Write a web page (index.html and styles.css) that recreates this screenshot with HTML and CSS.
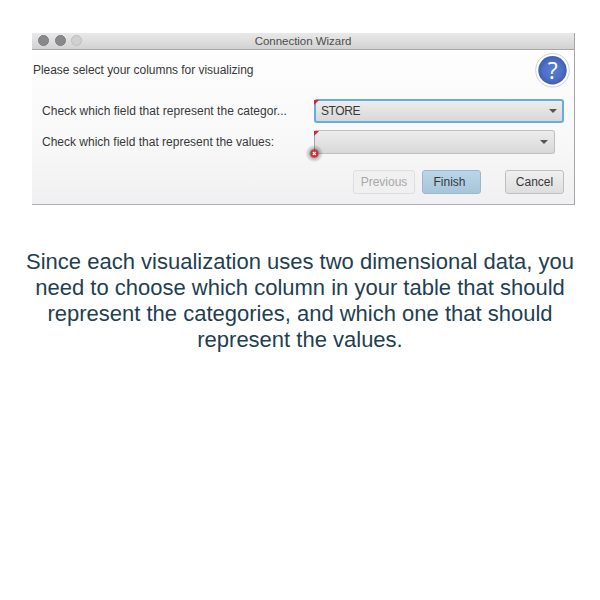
FILE: index.html
```
<!DOCTYPE html>
<html lang="en">
<head>
<meta charset="utf-8">
<title>Connection Wizard</title>
<link rel="stylesheet" href="styles.css">
</head>
<body>
<main class="window">
  <header class="titlebar">
    <div class="lights"><i class="light"></i><i class="light"></i><i class="light light-off"></i></div>
    <span class="title">Connection Wizard</span>
  </header>
  <div class="content">
    <div class="intro">
      <span class="intro-text">Please select your columns for visualizing</span>
      <svg class="help" width="35" height="35" viewBox="0 0 35 35">
        <defs><radialGradient id="blue"><stop offset="0" stop-color="#597fd0"/><stop offset=".65" stop-color="#4e70c5"/><stop offset="1" stop-color="#405db3"/></radialGradient></defs>
        <circle cx="17.5" cy="17.3" r="16.8" fill="#fff" stroke="#d2d2d4"/>
        <circle cx="17.5" cy="17.3" r="14.2" fill="url(#blue)"/>
        <text x="17.6" y="25.5" text-anchor="middle" class="help-mark">?</text>
      </svg>
    </div>
    <div class="row">
      <span class="label label-category">Check which field that represent the categor...</span>
      <div class="combo combo-focus"><i class="corner"></i><span class="store">STORE</span><i class="arrow"></i></div>
    </div>
    <div class="row row-values">
      <span class="label label-values">Check which field that represent the values:</span>
      <div class="combo combo-values"><i class="corner"></i><i class="arrow"></i>
        <svg class="error" width="24" height="24" viewBox="0 0 24 24">
          <defs><radialGradient id="shade"><stop offset=".3" stop-color="#000" stop-opacity=".55"/><stop offset=".6" stop-color="#000" stop-opacity=".2"/><stop offset="1" stop-color="#000" stop-opacity="0"/></radialGradient></defs>
          <circle cx="12.3" cy="12.5" r="9" fill="url(#shade)"/>
          <circle cx="12.3" cy="12.5" r="4" fill="#c9343d"/>
          <path d="M10.8 11l3 3M13.8 11l-3 3" stroke="#fff" stroke-width="1.1"/>
        </svg>
      </div>
    </div>
    <div class="buttons">
      <span class="button previous">Previous</span>
      <span class="button finish"><span class="finish-text">Finish</span></span>
      <span class="button cancel">Cancel</span>
    </div>
  </div>
</main>
<p class="caption">Since each visualization uses two dimensional data, you<br>need to choose which column in your table that should<br>represent the categories, and which one that should<br>represent the values.</p>
</body>
</html>
```
FILE: styles.css
```
* { box-sizing: border-box; }
body {
  margin: 0;
  padding-top: 33px;
  background: #fff;
  font-family: "Liberation Sans", Arial, sans-serif;
}
.window {
  width: 543px;
  height: 172px;
  margin-left: 32px;
  border-right: 1px solid #a5a5a8;
  border-bottom: 1px solid #b0b0b2;
  font-size: 12px;
  color: #38383a;
}
.titlebar {
  display: grid;
  grid-template-columns: 1fr auto 1fr;
  align-items: center;
  height: 17px;
  background: linear-gradient(#e9e9e9, #d2d2d2);
  border-bottom: 1px solid #a7a7a7;
}
.lights { display: flex; gap: 6px; padding-left: 6px; margin-top: -1px; }
.light { width: 11px; height: 11px; border-radius: 50%; background: #89898c; border: 1px solid #7c7c80; }
.light:nth-child(2) { margin-right: -1px; }
.light-off { background: #d0d0d0; border-color: #bdbdbd; }
.title { font-size: 11.5px; line-height: 16px; letter-spacing: -0.03px; color: #4d4d4d; }
.content { height: 154px; background: linear-gradient(#fefefe, #f8f8f8 60%, #f0f0f2); }
.intro {
  display: flex;
  justify-content: space-between;
  height: 49px;
  padding: 3px 4px 0 1px;
}
.intro-text { line-height: 34px; letter-spacing: -0.04px; }
.help-mark { font-family: "Open Sans", sans-serif; font-size: 23px; fill: #fff; }
.row { display: flex; height: 24px; padding-left: 10px; }
.row-values { margin-top: 7px; }
.label { width: 272px; line-height: 24px; white-space: nowrap; }
.label-category { letter-spacing: 0.03px; }
.store { letter-spacing: -0.4px; }
.combo {
  position: relative;
  display: flex;
  align-items: center;
  width: 250px;
  height: 24px;
  padding: 0 7px;
  border: 1px solid #bfbfc0;
  border-radius: 3px;
  background: linear-gradient(#ededed, #d8d8d8);
}
.combo-values { width: 241px; border-left-color: #a5a5a7; }
.combo-focus { border: 2px solid #62afdb; padding: 0 5px; }
.arrow { margin-left: auto; border: 4px solid transparent; border-top-color: #555; border-bottom: 0; }
.combo-values .arrow { margin-right: -1px; }
.corner {
  position: absolute;
  top: 0;
  left: -1px;
  border-top: 5px solid #db2030;
  border-right: 5px solid transparent;
}
.combo-focus .corner { top: -1px; left: -2px; }
.error { position: absolute; left: -13px; top: 10px; }
.buttons { display: flex; padding: 16px 10px 0 321px; }
.button {
  height: 24px;
  border: 1px solid #bfbfc1;
  border-radius: 3px;
  background: linear-gradient(#f0f0f0, #dedede);
  line-height: 22px;
  text-align: center;
}
.previous { width: 62px; color: #a8a8aa; background: #f0f0f1; border-color: #dedee0; }
.finish { width: 59px; margin-left: 7px; background: linear-gradient(#bad6e8, #a7c5da); border-color: #9eb7c7; }
.finish-text { margin-right: 4px; }
.cancel { width: 59px; margin-left: 24px; }
.caption {
  margin: 44px 0 0;
  font-size: 22px;
  line-height: 26px;
  text-align: center;
  color: #1f3f53;
}
```
